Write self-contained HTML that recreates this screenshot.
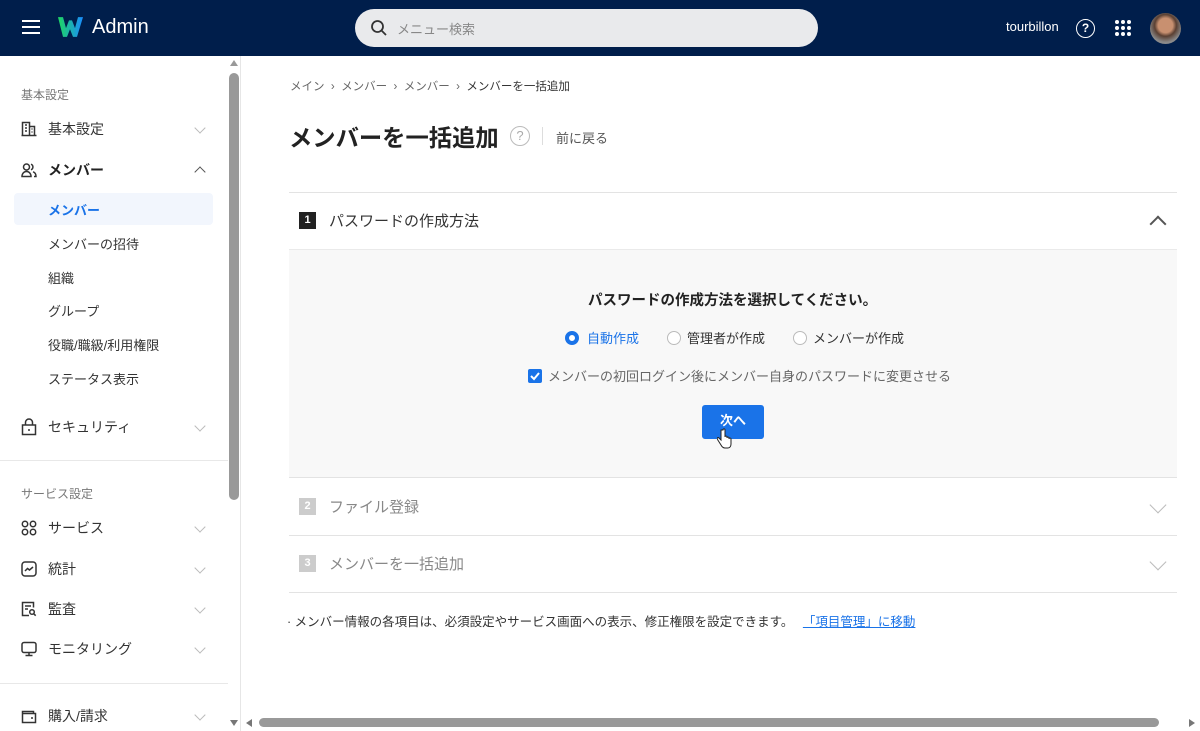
<!DOCTYPE html>
<html><head><meta charset="utf-8"><style>
*{box-sizing:border-box;margin:0;padding:0}
body{width:1200px;height:731px;overflow:hidden;background:#fff;font-family:"Liberation Sans","Noto Sans CJK JP",sans-serif;color:#222;position:relative}
.a{position:absolute}
.top{left:0;top:0;width:1200px;height:56px;background:#001e4b}
.side{left:0;top:56px;width:241px;height:675px;border-right:1px solid #e6e6e6;background:#fff}
.nav{font-size:14px;color:#333;white-space:nowrap}
.sub{font-size:13px;color:#333}
.cap{font-size:12px;color:#777}
.chev{width:8px;height:8px;border-right:1.2px solid #bbb;border-bottom:1.2px solid #bbb;transform:rotate(45deg)}
.ico{stroke:#333;fill:none;stroke-width:1.5}
</style></head><body>
<div class="a top"></div>
<div class="a" style="left:22px;top:20px;width:18px;height:2px;background:#fff;box-shadow:0 6px 0 #fff,0 12px 0 #fff"></div>
<svg class="a" style="left:57px;top:16px" width="26" height="22" viewBox="0 0 26 20" preserveAspectRatio="none"><defs><linearGradient id="g" x1="0" x2="1"><stop offset="0" stop-color="#1ed760"/><stop offset="1" stop-color="#1a8cff"/></linearGradient></defs><path d="M1 1h5l3 10 3-7h3l3 7 3-10h5l-6 18h-4l-3-7-3 7h-4z" fill="url(#g)"/></svg>
<div class="a" style="left:92px;top:16px;color:#fff;font-size:20px">Admin</div>
<div class="a" style="left:355px;top:9px;width:463px;height:38px;border-radius:19px;background:#e9eaec"></div>
<svg class="a" style="left:370px;top:19px" width="18" height="18" viewBox="0 0 18 18"><circle cx="7.5" cy="7.5" r="5.5" fill="none" stroke="#333" stroke-width="1.8"/><path d="M11.5 11.5l4.5 4.5" stroke="#333" stroke-width="1.8"/></svg>
<div class="a" style="left:397px;top:19px;font-size:13px;color:#888">メニュー検索</div>
<div class="a" style="left:1006px;top:19px;font-size:13px;color:#fff">tourbillon</div>
<div class="a" style="left:1076px;top:19px;width:19px;height:19px;border:1.6px solid #fff;border-radius:50%;color:#fff;font-size:12px;font-weight:bold;text-align:center;line-height:16px">?</div>
<svg class="a" style="left:1114px;top:19px" width="18" height="18"><g fill="#fff"><circle cx="3" cy="3" r="2"/><circle cx="9" cy="3" r="2"/><circle cx="15" cy="3" r="2"/><circle cx="3" cy="9" r="2"/><circle cx="9" cy="9" r="2"/><circle cx="15" cy="9" r="2"/><circle cx="3" cy="15" r="2"/><circle cx="9" cy="15" r="2"/><circle cx="15" cy="15" r="2"/></g></svg>
<div class="a" style="left:1150px;top:13px;width:31px;height:31px;border-radius:50%;background:radial-gradient(circle at 50% 40%,#c89070 0 30%,#5a4033 45%,#8a8a8a 70%)"></div>

<div class="a side"></div>
<div class="a cap" style="left:21px;top:86px">基本設定</div>
<svg class="a" style="left:21px;top:121px" width="16" height="16" viewBox="0 0 16 16"><path class="ico" d="M1.5 14.5v-13h7v13M8.5 5.5h5v9M.5 14.5h15M4 4h2M4 7h2M4 10h2M10.5 8h1M10.5 11h1"/></svg>
<div class="a nav" style="left:48px;top:119px">基本設定</div>
<div class="a chev" style="left:196px;top:124px"></div>
<svg class="a" style="left:21px;top:162px" width="16" height="16" viewBox="0 0 16 16"><path class="ico" d="M5.5 8a3 3 0 1 1 0-6 3 3 0 0 1 0 6zM1 14.5c0-3 2-5 4.5-5s4.5 2 4.5 5zM10 2.2a3 3 0 0 1 0 5.6M12 9.8c2 .6 3 2.4 3 4.7h-2"/></svg>
<div class="a nav" style="left:48px;top:160px;font-weight:bold;color:#222">メンバー</div>
<div class="a chev" style="left:196px;top:168px;transform:rotate(-135deg);border-color:#555"></div>
<div class="a" style="left:14px;top:193px;width:199px;height:32px;background:#f2f6fd;border-radius:4px"></div>
<div class="a sub" style="left:48px;top:200px;color:#1a73e8;font-weight:bold">メンバー</div>
<div class="a sub" style="left:48px;top:234px">メンバーの招待</div>
<div class="a sub" style="left:48px;top:268px">組織</div>
<div class="a sub" style="left:48px;top:301px">グループ</div>
<div class="a sub" style="left:48px;top:335px">役職/職級/利用権限</div>
<div class="a sub" style="left:48px;top:369px">ステータス表示</div>
<svg class="a" style="left:21px;top:418px" width="16" height="18" viewBox="0 0 16 18"><path class="ico" d="M4.5 7V4.5a3.5 3.5 0 0 1 7 0V7M1.5 7h13v9.5h-13z"/><circle cx="8" cy="12" r="1" fill="#333"/></svg>
<div class="a nav" style="left:48px;top:417px">セキュリティ</div>
<div class="a chev" style="left:196px;top:422px"></div>
<div class="a" style="left:0;top:460px;width:228px;height:1px;background:#e8e8e8"></div>
<div class="a cap" style="left:21px;top:485px">サービス設定</div>
<svg class="a" style="left:21px;top:520px" width="16" height="16"><g class="ico"><circle cx="4" cy="4" r="2.7"/><circle cx="12" cy="4" r="2.7"/><circle cx="4" cy="12" r="2.7"/><circle cx="12" cy="12" r="2.7"/></g></svg>
<div class="a nav" style="left:48px;top:518px">サービス</div>
<div class="a chev" style="left:196px;top:523px"></div>
<svg class="a" style="left:21px;top:561px" width="16" height="16"><rect class="ico" x="1" y="1" width="14" height="14" rx="3"/><path class="ico" d="M4 10l2.5-2.5 2 1.5L12 6"/></svg>
<div class="a nav" style="left:48px;top:559px">統計</div>
<div class="a chev" style="left:196px;top:564px"></div>
<svg class="a" style="left:21px;top:601px" width="16" height="16"><path class="ico" d="M8 14.5H1.5v-13h11v5M4 5h6M4 8h3"/><circle class="ico" cx="11" cy="11" r="2.3"/><path class="ico" d="M12.7 12.7l2 2"/></svg>
<div class="a nav" style="left:48px;top:599px">監査</div>
<div class="a chev" style="left:196px;top:604px"></div>
<svg class="a" style="left:21px;top:641px" width="16" height="16"><rect class="ico" x="1" y="1.5" width="14" height="10" rx="2"/><path class="ico" d="M8 11.5v3M4.5 14.5h7"/></svg>
<div class="a nav" style="left:48px;top:639px">モニタリング</div>
<div class="a chev" style="left:196px;top:644px"></div>
<div class="a" style="left:0;top:683px;width:228px;height:1px;background:#e8e8e8"></div>
<svg class="a" style="left:21px;top:708px" width="16" height="16"><path class="ico" d="M1.5 3.5h11v2h2v9h-13zM1.5 5.5h11"/><circle cx="11" cy="10" r="1" fill="#333"/></svg>
<div class="a nav" style="left:48px;top:706px">購入/請求</div>
<div class="a chev" style="left:196px;top:711px"></div>
<div class="a" style="left:230px;top:60px;width:0;height:0;border-left:4px solid transparent;border-right:4px solid transparent;border-bottom:6px solid #999"></div>
<div class="a" style="left:229px;top:73px;width:10px;height:427px;background:#999;border-radius:5px"></div>
<div class="a" style="left:230px;top:720px;width:0;height:0;border-left:4px solid transparent;border-right:4px solid transparent;border-top:6px solid #777"></div>
<div class="a" style="left:246px;top:719px;width:0;height:0;border-top:4px solid transparent;border-bottom:4px solid transparent;border-right:6px solid #777"></div>
<div class="a" style="left:259px;top:718px;width:900px;height:9px;background:#999;border-radius:5px"></div>
<div class="a" style="left:1189px;top:719px;width:0;height:0;border-top:4px solid transparent;border-bottom:4px solid transparent;border-left:6px solid #777"></div>

<div class="a" style="left:290px;top:78px;font-size:11.5px;color:#666;white-space:nowrap">メイン &nbsp;›&nbsp; メンバー &nbsp;›&nbsp; メンバー &nbsp;›&nbsp; <span style="color:#333">メンバーを一括追加</span></div>
<div class="a" style="left:289px;top:119px;font-size:23.3px;font-weight:bold;color:#222">メンバーを一括追加</div>
<div class="a" style="left:510px;top:126px;width:20px;height:20px;border:1.3px solid #bbb;border-radius:50%;color:#aaa;font-size:13px;text-align:center;line-height:18px">?</div>
<div class="a" style="left:542px;top:127px;width:1px;height:18px;background:#ddd"></div>
<div class="a" style="left:556px;top:128px;font-size:13px;color:#555">前に戻る</div>

<div class="a" style="left:289px;top:192px;width:888px;height:1px;background:#e3e3e3"></div>
<div class="a" style="left:299px;top:212px;width:17px;height:17px;background:#222;color:#fff;font-size:11px;font-weight:bold;text-align:center;line-height:17px">1</div>
<div class="a" style="left:329px;top:210px;font-size:15px;color:#333">パスワードの作成方法</div>
<div class="a" style="left:1152px;top:218px;width:12px;height:12px;border-left:2px solid #555;border-top:2px solid #555;transform:rotate(45deg)"></div>
<div class="a" style="left:289px;top:249px;width:888px;height:229px;background:#f8f8f8;border-top:1px solid #eaeaea;border-bottom:1px solid #e3e3e3"></div>
<div class="a" style="left:588px;top:289px;font-size:14.5px;font-weight:bold;color:#222">パスワードの作成方法を選択してください。</div>
<div class="a" style="left:565px;top:331px;width:14px;height:14px;border-radius:50%;border:4px solid #1a73e8;background:#fff"></div>
<div class="a" style="left:587px;top:328px;font-size:13px;color:#1a73e8">自動作成</div>
<div class="a" style="left:667px;top:331px;width:14px;height:14px;border-radius:50%;border:1px solid #bbb;background:#fff"></div>
<div class="a" style="left:687px;top:328px;font-size:13px;color:#333">管理者が作成</div>
<div class="a" style="left:793px;top:331px;width:14px;height:14px;border-radius:50%;border:1px solid #bbb;background:#fff"></div>
<div class="a" style="left:813px;top:328px;font-size:13px;color:#333">メンバーが作成</div>
<div class="a" style="left:528px;top:369px;width:14px;height:14px;border-radius:2px;background:#1a73e8"></div>
<svg class="a" style="left:528px;top:369px" width="14" height="14"><path d="M3 7l3 3 5-6" stroke="#fff" stroke-width="2" fill="none"/></svg>
<div class="a" style="left:548px;top:366px;font-size:13px;color:#666">メンバーの初回ログイン後にメンバー自身のパスワードに変更させる</div>
<div class="a" style="left:702px;top:405px;width:62px;height:34px;background:#1a73e8;border-radius:3px;color:#fff;font-size:13px;font-weight:bold;text-align:center;line-height:31px">次へ</div>
<svg class="a" style="left:717px;top:428px" width="16" height="22" viewBox="0 0 16 22"><path d="M4 2v10l-2-2c-1-1-2.5 0-1.5 1.5L4 17c1 2 2 3 4 3h3c2 0 3-2 3-4v-5c0-1-2-1.5-2 0v-1c0-1-2-1.5-2 0v-1c0-1-2-1.5-2 0V2c0-1.5-2-1.5-2 0z" fill="#fff" stroke="#222" stroke-width="1"/></svg>

<div class="a" style="left:299px;top:498px;width:17px;height:17px;background:#ccc;color:#fff;font-size:11px;font-weight:bold;text-align:center;line-height:17px">2</div>
<div class="a" style="left:329px;top:496px;font-size:15px;color:#888">ファイル登録</div>
<div class="a" style="left:1152px;top:499px;width:12px;height:12px;border-right:1.6px solid #bbb;border-bottom:1.6px solid #bbb;transform:rotate(45deg)"></div>
<div class="a" style="left:289px;top:535px;width:888px;height:1px;background:#e3e3e3"></div>
<div class="a" style="left:299px;top:555px;width:17px;height:17px;background:#ccc;color:#fff;font-size:11px;font-weight:bold;text-align:center;line-height:17px">3</div>
<div class="a" style="left:329px;top:553px;font-size:15px;color:#888">メンバーを一括追加</div>
<div class="a" style="left:1152px;top:556px;width:12px;height:12px;border-right:1.6px solid #bbb;border-bottom:1.6px solid #bbb;transform:rotate(45deg)"></div>
<div class="a" style="left:289px;top:592px;width:888px;height:1px;background:#e3e3e3"></div>
<div class="a" style="left:287px;top:611px;font-size:12.5px;color:#333;white-space:nowrap">· メンバー情報の各項目は、必須設定やサービス画面への表示、修正権限を設定できます。 <span style="color:#1a73e8;text-decoration:underline;margin-left:6px">「項目管理」に移動</span></div>
</body></html>
